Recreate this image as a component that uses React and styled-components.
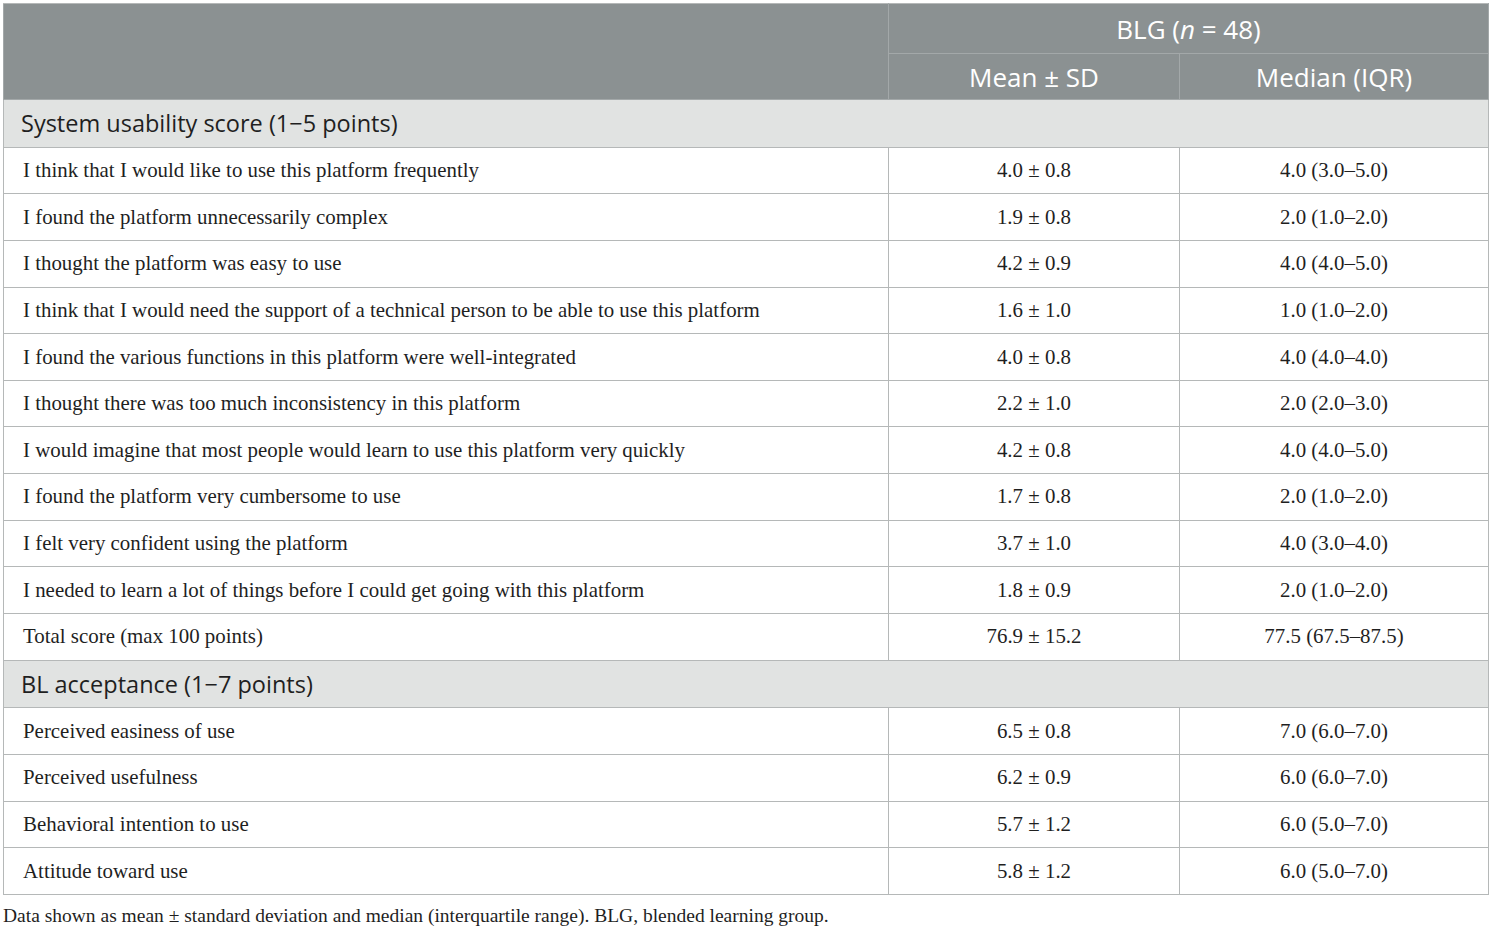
import React from 'react';
import styled, { createGlobalStyle } from 'styled-components';

const GlobalStyle = createGlobalStyle`
  body {
    margin: 0;
    background: #ffffff;
  }
`;

const Page = styled.div`
  padding: 3px 3px 0 3px;
  width: 1485px;
`;

const Table = styled.table`
  width: 1485px;
  border-collapse: collapse;
  table-layout: fixed;
  border: 1px solid #b5b8b8;
`;

const HeadCell = styled.th`
  background: #8b9192;
  color: #ffffff;
  font-family: "Open Sans", Lato, sans-serif;
  font-weight: 400;
  font-size: 26px;
  text-align: center;
  padding: 0;
  height: ${(p) => p.h}px;
  border: 1px solid #a3a8a9;
  border-top-color: #b5b8b8;
  i {
    font-style: italic;
  }
`;

const SectionCell = styled.td`
  background: #e1e3e2;
  color: #1f1f1f;
  font-family: "Open Sans", Lato, sans-serif;
  font-size: 23.5px;
  padding: 0 0 0 17px;
  height: 46.65px;
  border: 1px solid #b5b8b8;
`;

const Cell = styled.td`
  font-family: "Liberation Serif", "DejaVu Serif", serif;
  font-size: 20.9px;
  color: #1f1f1f;
  height: 46.65px;
  padding: 0 0 0 ${(p) => (p.center ? 0 : 19)}px;
  text-align: ${(p) => (p.center ? 'center' : 'left')};
  border: 1px solid #b5b8b8;
  box-sizing: border-box;
`;

const Note = styled.p`
  margin: 10px 0 0 0;
  font-family: "Liberation Serif", "DejaVu Serif", serif;
  font-size: 19.5px;
  line-height: 1.15;
  color: #1f1f1f;
`;

const sus = [
  ['I think that I would like to use this platform frequently', '4.0 ± 0.8', '4.0 (3.0–5.0)'],
  ['I found the platform unnecessarily complex', '1.9 ± 0.8', '2.0 (1.0–2.0)'],
  ['I thought the platform was easy to use', '4.2 ± 0.9', '4.0 (4.0–5.0)'],
  ['I think that I would need the support of a technical person to be able to use this platform', '1.6 ± 1.0', '1.0 (1.0–2.0)'],
  ['I found the various functions in this platform were well-integrated', '4.0 ± 0.8', '4.0 (4.0–4.0)'],
  ['I thought there was too much inconsistency in this platform', '2.2 ± 1.0', '2.0 (2.0–3.0)'],
  ['I would imagine that most people would learn to use this platform very quickly', '4.2 ± 0.8', '4.0 (4.0–5.0)'],
  ['I found the platform very cumbersome to use', '1.7 ± 0.8', '2.0 (1.0–2.0)'],
  ['I felt very confident using the platform', '3.7 ± 1.0', '4.0 (3.0–4.0)'],
  ['I needed to learn a lot of things before I could get going with this platform', '1.8 ± 0.9', '2.0 (1.0–2.0)'],
  ['Total score (max 100 points)', '76.9 ± 15.2', '77.5 (67.5–87.5)'],
];

const acceptance = [
  ['Perceived easiness of use', '6.5 ± 0.8', '7.0 (6.0–7.0)'],
  ['Perceived usefulness', '6.2 ± 0.9', '6.0 (6.0–7.0)'],
  ['Behavioral intention to use', '5.7 ± 1.2', '6.0 (5.0–7.0)'],
  ['Attitude toward use', '5.8 ± 1.2', '6.0 (5.0–7.0)'],
];

function Rows({ rows }) {
  return rows.map(([label, mean, median]) => (
    <tr key={label}>
      <Cell>{label}</Cell>
      <Cell center>{mean}</Cell>
      <Cell center>{median}</Cell>
    </tr>
  ));
}

export default function App() {
  return (
    <Page>
      <GlobalStyle />
      <Table>
        <colgroup>
          <col style={{ width: 885 }} />
          <col style={{ width: 291 }} />
          <col style={{ width: 309 }} />
        </colgroup>
        <thead>
          <tr>
            <HeadCell rowSpan={2} h={49} />
            <HeadCell colSpan={2} h={49}>
              BLG (<i>n</i> = 48)
            </HeadCell>
          </tr>
          <tr>
            <HeadCell h={45}>Mean ± SD</HeadCell>
            <HeadCell h={45}>Median (IQR)</HeadCell>
          </tr>
        </thead>
        <tbody>
          <tr>
            <SectionCell colSpan={3}>System usability score (1−5 points)</SectionCell>
          </tr>
          <Rows rows={sus} />
          <tr>
            <SectionCell colSpan={3}>BL acceptance (1−7 points)</SectionCell>
          </tr>
          <Rows rows={acceptance} />
        </tbody>
      </Table>
      <Note>
        Data shown as mean ± standard deviation and median (interquartile range). BLG, blended learning group.
      </Note>
    </Page>
  );
}
